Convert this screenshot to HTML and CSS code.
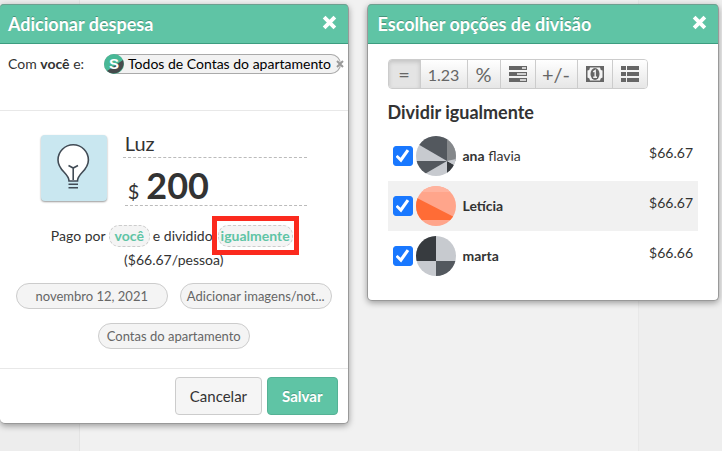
FILE: index.html
```html
<!DOCTYPE html>
<html lang="pt-BR">
<head>
  <meta charset="UTF-8" />
  <meta name="viewport" content="width=device-width, initial-scale=1.0" />
  <title>Adicionar despesa</title>
  <link rel="stylesheet" href="styles.css">
</head>
<body>
  <main class="page">
    <section class="panel panel-expense">
      <header class="panel-header">
        <h2>Adicionar despesa</h2>
        <button class="close" type="button" aria-label="Fechar">
          <svg width="15" height="15" viewBox="0 0 14 14"><path d="M2 2L12 12M12 2L2 12" stroke="#fff" stroke-width="3.6" /></svg>
        </button>
      </header>

      <div class="with-row">
        <span>Com <strong>você</strong> e:</span>
        <span class="token">
          <svg class="token-logo" width="20" height="20" viewBox="0 0 20 20">
            <circle cx="10" cy="10" r="10" fill="#48b896" />
            <path d="M19 6A10 10 0 0 1 3 17Z" fill="#464a4c" />
            <text x="10" y="15" text-anchor="middle">S</text>
          </svg>
          <span>Todos de Contas do apartamento</span>
          <button class="token-remove" type="button" aria-label="Remover">
            <svg width="8" height="8" viewBox="0 0 8 8"><path d="M1 1L7 7M7 1L1 7" stroke="#999" stroke-width="2" /></svg>
          </button>
        </span>
      </div>

      <div class="expense">
        <div class="main-fields">
          <button class="category" type="button" aria-label="Categoria: Luz">
            <svg width="66" height="66" viewBox="0 0 66 66" fill="none" stroke="#414b55" stroke-width="1.6">
              <path d="M28 46C28 38 17 36 17 25A15.2 15.2 0 0 1 47.400 25C47.400 36 36.500 38 36.500 46Z" fill="#fff" />
              <path d="M32.200 45V32M27.500 30.500L32.200 33L37 30.500M27.500 49.300H37M27.500 52.800H37" />
            </svg>
          </button>
          <div class="fields">
            <input class="description" type="text" value="Luz" aria-label="Descrição" />
            <div class="amount-row">
              <label for="amount">$</label>
              <input class="amount" id="amount" type="text" value="200" />
            </div>
          </div>
        </div>

        <div class="summary">
          <div class="summary-line">
            <span>Pago por</span>
            <button class="inline-choice" type="button">você</button>
            <span>e dividido</span>
            <span class="marked"><button class="inline-choice" type="button">igualmente</button></span>
          </div>
          <div>($66.67/pessoa)</div>
        </div>

        <div class="chips">
          <button class="chip" type="button">novembro 12, 2021</button>
          <button class="chip" type="button">Adicionar imagens/not...</button>
          <button class="chip" type="button">Contas do apartamento</button>
        </div>
      </div>

      <footer class="panel-footer">
        <button class="btn" type="button">Cancelar</button>
        <button class="btn btn-primary" type="button">Salvar</button>
      </footer>
    </section>

    <section class="panel panel-split">
      <header class="panel-header">
        <h2>Escolher opções de divisão</h2>
        <button class="close" type="button" aria-label="Fechar">
          <svg width="15" height="15" viewBox="0 0 14 14"><path d="M2 2L12 12M12 2L2 12" stroke="#fff" stroke-width="3.6" /></svg>
        </button>
      </header>

      <div class="split-body">
        <div class="toolbar">
          <button class="tool active" type="button">=</button>
          <button class="tool tool-exact" type="button">1.23</button>
          <button class="tool tool-percent" type="button">%</button>
          <button class="tool" type="button" aria-label="Partes">
            <svg width="18" height="16" viewBox="0 0 18 16">
              <path d="M0 0H18V4H0ZM0 6H18V10H0ZM0 12H18V16H0Z" fill="#666" />
              <path d="M13 1.200H17V2.800H13ZM8 7.200H17V8.800H8ZM11 13.200H17V14.800H11Z" fill="#f4f4f4" />
            </svg>
          </button>
          <button class="tool tool-adjust" type="button">+/-</button>
          <button class="tool" type="button" aria-label="Reembolso">
            <svg width="18" height="16" viewBox="0 0 18 16">
              <path d="M0 0H18V16H0Z" fill="#666" />
              <path d="M4 1.500H14Q14 4 16.500 4.500V11.500Q14 12 14 14.500H4Q4 12 1.500 11.500V4.500Q4 4 4 1.500Z" fill="#f4f4f4" />
              <ellipse cx="9" cy="8" rx="4.500" ry="6" fill="#666" />
              <path d="M7.200 5.800L9.200 4.500V11M7.200 11.200H11" fill="none" stroke="#f4f4f4" stroke-width="1.400" />
            </svg>
          </button>
          <button class="tool" type="button" aria-label="Itens">
            <svg width="18" height="16" viewBox="0 0 18 16">
              <path d="M0 0H5V4H0ZM6 0H18V4H6ZM0 6H5V10H0ZM6 6H18V10H6ZM0 12H5V16H0ZM6 12H18V16H6Z" fill="#666" />
            </svg>
          </button>
        </div>

        <h3>Dividir igualmente</h3>

        <ul class="people">
          <li class="person">
            <input type="checkbox" id="person-ana" checked />
            <label for="person-ana">
              <svg class="avatar" width="40" height="40" viewBox="0 0 40 40">
                <path d="M0 0H40V40H0Z" fill="#c7cacf" />
                <path d="M0 7V0H31V25Z" fill="#53585e" />
                <path d="M31 0H40V25H31Z" fill="#85888b" />
                <path d="M0 25H31L7 39H0Z" fill="#53585e" />
                <path d="M31 25L40 30V40H31Z" fill="#373b3f" />
                <path d="M31 25L40 23V30Z" fill="#c7cacf" />
              </svg>
              <span><strong>ana</strong> flavia</span>
            </label>
            <span class="share">$66.67</span>
          </li>
          <li class="person">
            <input type="checkbox" id="person-leticia" checked />
            <label for="person-leticia">
              <svg class="avatar" width="40" height="40" viewBox="0 0 40 40">
                <path d="M0 0H40V40H0Z" fill="#ffa58b" />
                <path d="M0 0H40V6H0Z" fill="#ffb39e" />
                <path d="M0 11.500L40 32V34H0Z" fill="#ff6c36" />
              </svg>
              <strong>Letícia</strong>
            </label>
            <span class="share">$66.67</span>
          </li>
          <li class="person">
            <input type="checkbox" id="person-marta" checked />
            <label for="person-marta">
              <svg class="avatar" width="40" height="40" viewBox="0 0 40 40">
                <path d="M0 0H40V40H0Z" fill="#c7cacf" />
                <path d="M0 0H20V25H0Z" fill="#373b3f" />
                <path d="M20 25H40V40H20Z" fill="#53585e" />
              </svg>
              <strong>marta</strong>
            </label>
            <span class="share">$66.66</span>
          </li>
        </ul>
      </div>
    </section>
  </main>
</body>
</html>
```
FILE: styles.css
```css
* {
  box-sizing: border-box;
}
body {
  margin: 0;
  min-height: 100vh;
  font-family: Lato, sans-serif;
  font-size: 14px;
  line-height: 20px;
  color: #333;
  background: linear-gradient(to right, #ededed 79px, #e4e4e4 79px, #e4e4e4 80px, #f1f1f1 80px, #f1f1f1 638px, #e8e8e8 638px, #e8e8e8 639px, #eee 639px);
}
button,
input {
  font-family: inherit;
  color: inherit;
  margin: 0;
}
button {
  cursor: pointer;
}
.page {
  display: flex;
  align-items: flex-start;
  gap: 18px;
  padding: 4px 3px 0 0;
}
.panel {
  min-width: 0;
  background: #fff;
  border: 1px solid #999;
  border-top: 0;
  border-radius: 5px;
  box-shadow: 0 2px 6px rgba(0, 0, 0, 0.35);
}
.panel-expense {
  flex: 349;
  border-left: 0;
}
.panel-split {
  flex: 352;
}
.panel-header {
  display: flex;
  align-items: center;
  justify-content: space-between;
  height: 40px;
  padding: 0 11px 0 8px;
  background: #5fc4a5;
  border-bottom: 1px solid #3c9d80;
  border-radius: 4px 4px 0 0;
  box-shadow: inset 0 1px 0 #6f9f90;
}
.panel-split .panel-header {
  padding-left: 10px;
}
h2 {
  margin: 0;
  font-size: 18px;
  font-weight: 700;
  color: #fff;
  text-shadow: 0 -1px 0 rgba(0, 0, 0, 0.25);
}
.close {
  display: flex;
  padding: 0 0 2px;
  background: none;
  border: 0;
}

/* who the expense is shared with */
.with-row {
  display: flex;
  align-items: flex-start;
  gap: 20px;
  height: 67px;
  padding: 10px 8px;
  white-space: nowrap;
  border-bottom: 1px solid #e8e8e8;
}
.token {
  display: flex;
  align-items: center;
  gap: 4px;
  position: relative;
  height: 20px;
  padding-right: 10px;
  color: #000;
  background: #f2f2f2;
  border-radius: 10px;
  box-shadow: inset 0 0 0 1px #aaa;
}
.token-logo text {
  font-family: "Liberation Sans", sans-serif;
  font-size: 15px;
  font-weight: 700;
  fill: #fff;
}
.token-remove {
  display: flex;
  position: absolute;
  right: -3px;
  padding: 0;
  background: none;
  border: 0;
}

.expense {
  padding: 20px 15px 19px;
}
.main-fields {
  display: flex;
  justify-content: center;
  gap: 16px;
}
.category {
  display: flex;
  width: 66px;
  height: 66px;
  margin-top: 4px;
  padding: 0;
  background: #c9e7f0;
  border: 0;
  border-radius: 4px;
  box-shadow: 0 1px 2px rgba(0, 0, 0, 0.4);
}
.fields {
  width: 184px;
}
.fields input {
  width: 100%;
  padding: 0;
  background: none;
  border: 0;
}
.fields .description {
  display: block;
  height: 27px;
  padding: 0 2px 2px;
  font-size: 20px;
  border-bottom: 1px dashed #bbb;
}
.amount-row {
  display: flex;
  align-items: baseline;
  gap: 7px;
  height: 48px;
  margin-left: 2px;
  padding: 6px 0 0 3px;
  font-size: 20px;
  border-bottom: 1px dashed #bbb;
}
.fields .amount {
  height: 41px;
  font-size: 36px;
  font-weight: 700;
}
.summary {
  margin-top: 18px;
  text-align: center;
  line-height: 24px;
}
.summary-line {
  display: flex;
  align-items: center;
  justify-content: center;
  gap: 3px;
}
.inline-choice {
  height: 22px;
  padding: 0 5px;
  font-size: 14px;
  line-height: 20px;
  font-weight: 700;
  color: #5fc4a5;
  background: #f4f4f4;
  border: 1px dashed #ccc;
  border-radius: 10px;
}
/* red frame drawn over the split button */
.marked {
  display: flex;
  position: relative;
  margin: 0 4px 0 2px;
}
.marked .inline-choice {
  padding: 0 2px;
}
.marked::after {
  content: "";
  position: absolute;
  inset: -9px -6px -8px;
  border: 5px solid #fb2a1e;
  pointer-events: none;
}
.chips {
  display: flex;
  flex-wrap: wrap;
  justify-content: center;
  gap: 14px 12px;
  margin-top: 11px;
}
.chip {
  width: 152px;
  height: 26px;
  padding: 0 4px;
  font-size: 13px;
  color: #666;
  white-space: nowrap;
  background: #f4f4f4;
  border: 1px solid #ccc;
  border-radius: 13px;
}
.panel-footer {
  display: flex;
  justify-content: flex-end;
  gap: 5px;
  padding: 8px 10px;
  border-top: 1px solid #e8e8e8;
}
.btn {
  height: 38px;
  padding: 0 14px;
  font-size: 15px;
  background: #f5f5f5;
  border: 1px solid #ccc;
  border-radius: 4px;
}
.btn-primary {
  font-weight: 700;
  color: #fff;
  background: #5fc4a5;
  border-color: #55b295;
  text-shadow: 0 -1px 0 rgba(0, 0, 0, 0.2);
}

.split-body {
  padding: 15px 20px 19px;
}
.toolbar {
  display: flex;
  width: fit-content;
  height: 30px;
  border: 1px solid #ccc;
  border-radius: 4px;
  overflow: hidden;
}
.tool {
  display: flex;
  align-items: center;
  justify-content: center;
  width: 35px;
  padding: 0;
  font-size: 20px;
  color: #666;
  background: linear-gradient(#fff, #e6e6e6);
  border: 0;
  border-left: 1px solid #ccc;
}
.tool.active {
  width: 31px;
  background: #e4e4e4;
  border-left: 0;
  box-shadow: inset 0 2px 4px rgba(0, 0, 0, 0.15);
}
.tool-exact {
  width: 47px;
  font-size: 16px;
}
.tool-percent {
  width: 33px;
}
.tool-adjust {
  width: 42px;
}
h3 {
  margin: 13px 0 9px;
  font-size: 18px;
  line-height: 20px;
  font-weight: 700;
}
.people {
  margin: 0;
  padding: 0;
  list-style: none;
}
.person {
  display: flex;
  align-items: center;
  gap: 3px;
  height: 50px;
  padding: 0 5px;
}
.person:nth-child(even) {
  background: #f1f1f1;
}
.person label {
  display: flex;
  align-items: center;
  gap: 7px;
  flex: 1;
}
.person input {
  display: grid;
  place-items: center;
  width: 20px;
  height: 20px;
  appearance: none;
  background: #fff;
  border: 1px solid #999;
  border-radius: 3px;
}
.person input:checked {
  background: #1978ff;
  border-color: #1978ff;
}
.person input:checked::before {
  content: "";
  width: 14px;
  height: 14px;
  background: #fff;
  clip-path: polygon(0 55%, 15% 42%, 36% 62%, 80% 2%, 98% 15%, 40% 96%);
}
.avatar {
  border-radius: 50%;
}
.share {
  padding-bottom: 6px;
}
```
